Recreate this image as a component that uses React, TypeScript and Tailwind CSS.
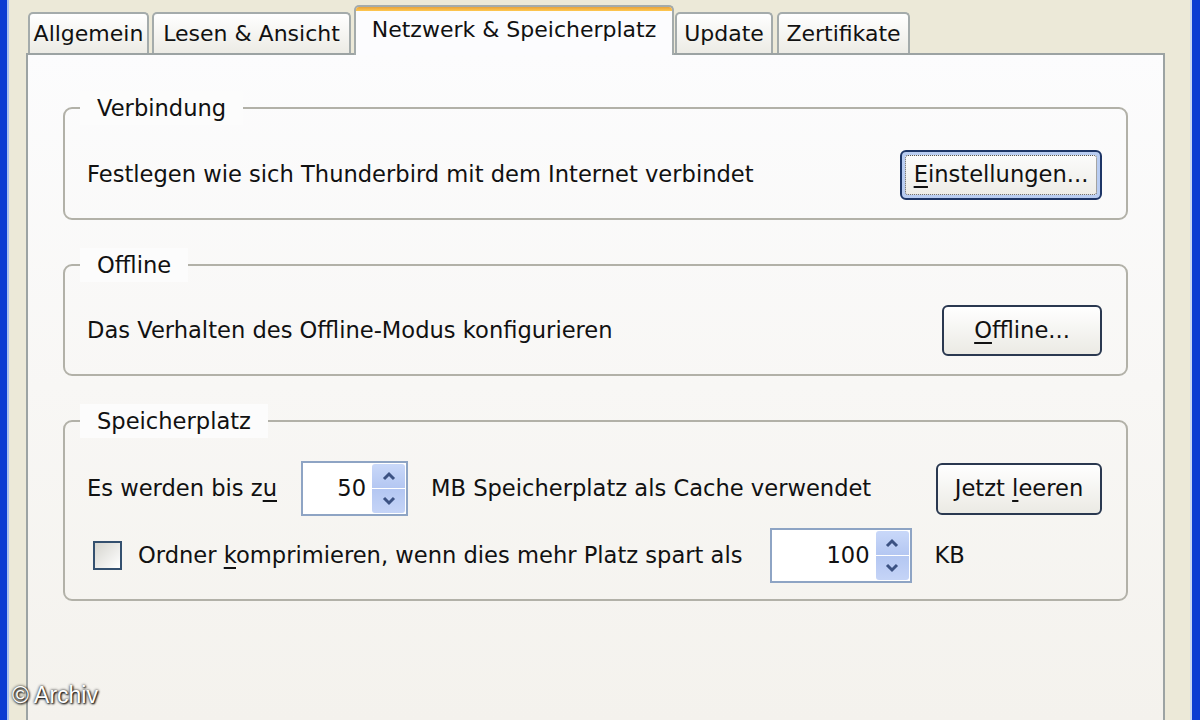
import React from "react";

const font = "font-['DejaVu_Sans',Tahoma,sans-serif]";

function Tab({ label, w, ml }: { label: string; w: string; ml: string }) {
  return (
    <div
      className={`${w} ${ml} flex h-[41px] items-center justify-center rounded-t-[5px] border-2 border-b-0 border-[#a4abab] bg-linear-to-b from-white to-[#ecebe5] text-[22px] text-[#111]`}
    >
      {label}
    </div>
  );
}

function Chevron({ up }: { up?: boolean }) {
  return (
    <svg width="14" height="10" viewBox="0 0 14 10" className="block">
      <path
        d={up ? "M2 8 L7 3 L12 8" : "M2 2 L7 7 L12 2"}
        fill="none"
        stroke="#3c5283"
        strokeWidth="3"
      />
    </svg>
  );
}

function Spinner({ value, w }: { value: string; w: string }) {
  return (
    <div className={`${w} flex h-[55px] items-stretch border-2 border-[#8ea4c4] bg-white p-[1px]`}>
      <div className="flex flex-1 items-center justify-end pr-[6px] text-[22.6px] text-[#111]">{value}</div>
      <div className="flex w-[33px] flex-col gap-[1px]">
        <div className="flex flex-1 items-center justify-center rounded-t-[3px] bg-linear-to-b from-[#c9d8f9] to-[#b4c7f2]">
          <Chevron up />
        </div>
        <div className="flex flex-1 items-center justify-center rounded-b-[3px] bg-linear-to-b from-[#b4c7f2] to-[#c5d4f7]">
          <Chevron />
        </div>
      </div>
    </div>
  );
}

function Button({ children, w, h, isDefault }: { children: React.ReactNode; w: string; h: string; isDefault?: boolean }) {
  if (isDefault) {
    return (
      <div className={`${w} ${h} rounded-[6px] border-2 border-[#1d3566] bg-[#b9cdf2] p-[3px]`}>
        <div className="flex h-full items-center justify-center rounded-[3px] border border-dotted border-[#555] bg-linear-to-b from-[#fbfbfb] to-[#eeede8] text-[22.6px] text-[#111]">
          {children}
        </div>
      </div>
    );
  }
  return (
    <div
      className={`${w} ${h} flex items-center justify-center rounded-[6px] border-2 border-[#2a3850] bg-linear-to-b from-white to-[#ebeae4] text-[22.6px] text-[#111]`}
    >
      {children}
    </div>
  );
}

function Group({ title, children, body }: { title: string; children: React.ReactNode; body: string }) {
  return (
    <fieldset className="rounded-[9px] border-2 border-[#b2b1a8]">
      <legend className="ml-[15px] bg-[#fcfcfc] px-[17px] py-[5px] text-[22.6px] leading-[24px] text-[#111]">{title}</legend>
      <div className={body}>{children}</div>
    </fieldset>
  );
}

export default function App() {
  return (
    <div className={`${font} relative flex h-[720px] w-[1200px] overflow-hidden bg-[#ece9d8]`}>
      <div className="w-[9px] border-r-2 border-[#a9c2ef] bg-[#0b3cd2]" />
      <div className="flex flex-1 flex-col pl-[17px] pr-[25px] pt-[5px]">
        <div className="flex h-[48px] items-end">
          <Tab label="Allgemein" w="w-[121px]" ml="ml-[2px]" />
          <Tab label="Lesen & Ansicht" w="w-[199px]" ml="ml-[3px]" />
          <div className="relative z-10 -mb-[2px] ml-[3px] flex h-[50px] w-[320px] flex-col overflow-hidden rounded-t-[5px] border-2 border-b-0 border-[#a4abab] bg-[#fcfcfe]">
            <div className="h-[4px] bg-linear-to-b from-[#e8a33a] to-[#ffc850]" />
            <div className="flex flex-1 items-center justify-center pb-[7px] text-[22px] text-[#111]">
              Netzwerk &amp; Speicherplatz
            </div>
          </div>
          <Tab label="Update" w="w-[98px]" ml="ml-[1px]" />
          <Tab label="Zertifikate" w="w-[133px]" ml="ml-[4px]" />
        </div>
        <div className="flex flex-1 flex-col gap-[28px] border-2 border-b-0 border-[#9ca3a3] bg-linear-to-b from-[#fcfcfd] to-[#f4f2ed] px-[35px] pt-[36px]">
          <Group title="Verbindung" body="flex items-center justify-between pb-[18px] pl-[22px] pr-[24px] pt-[25px]">
            <span className="text-[22.6px] text-[#111]">Festlegen wie sich Thunderbird mit dem Internet verbindet</span>
            <Button w="w-[202px]" h="h-[50px]" isDefault>
              <span>
                <span className="underline underline-offset-[4px]">E</span>instellungen...
              </span>
            </Button>
          </Group>
          <Group title="Offline" body="flex items-center justify-between pb-[18px] pl-[22px] pr-[24px] pt-[23px]">
            <span className="text-[22.6px] text-[#111]">Das Verhalten des Offline-Modus konfigurieren</span>
            <Button w="w-[160px]" h="h-[51px]">
              <span>
                <span className="underline underline-offset-[4px]">O</span>ffline...
              </span>
            </Button>
          </Group>
          <Group title="Speicherplatz" body="flex flex-col gap-[12px] pb-[16px] pl-[22px] pr-[24px] pt-[23px]">
            <div className="flex h-[55px] items-center text-[22.6px] text-[#111]">
              <span>
                Es werden bis z<span className="underline underline-offset-[4px]">u</span>
              </span>
              <div className="ml-[24px]">
                <Spinner value="50" w="w-[107px]" />
              </div>
              <span className="ml-[23px]">MB Speicherplatz als Cache verwendet</span>
              <div className="ml-auto">
                <Button w="w-[166px]" h="h-[52px]">
                  <span>
                    Jetzt <span className="underline underline-offset-[4px]">l</span>eeren
                  </span>
                </Button>
              </div>
            </div>
            <div className="flex h-[55px] items-center text-[22.6px] text-[#111]">
              <div className="ml-[6px] h-[29px] w-[29px] border-2 border-[#34506f] bg-linear-to-br from-[#d6d5cf] to-white" />
              <span className="ml-[16px]">
                Ordner <span className="underline underline-offset-[4px]">k</span>omprimieren, wenn dies mehr Platz spart als
              </span>
              <div className="ml-[27px]">
                <Spinner value="100" w="w-[142px]" />
              </div>
              <span className="ml-[23px]">KB</span>
            </div>
          </Group>
        </div>
      </div>
      <div className="w-[10px] border-l-2 border-[#c9d6ef] bg-[#0b3cd2]" />
      <div className="absolute bottom-[8px] left-[12px] font-['Liberation_Sans',Arial,sans-serif] text-[23px] text-white [text-shadow:0_0_3px_#000,1px_1px_2px_#000]">
        © Archiv
      </div>
    </div>
  );
}
